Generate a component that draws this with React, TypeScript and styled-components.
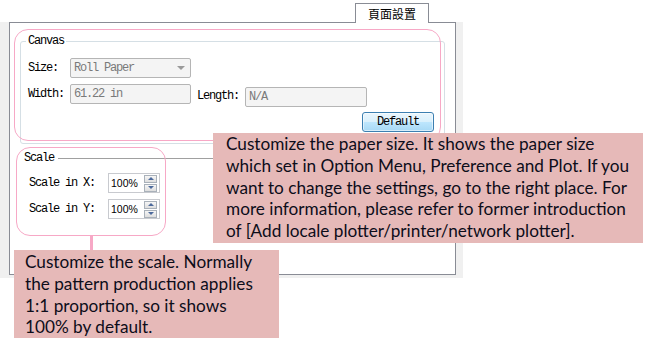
import React from "react";
import styled, { createGlobalStyle } from "styled-components";

const Global = createGlobalStyle`
  html, body { margin: 0; padding: 0; background: #ffffff; }
  body { width: 650px; height: 342px; overflow: hidden; }
`;

const Stage = styled.div`
  position: relative;
  width: 650px;
  height: 342px;
  font-family: "Liberation Mono", monospace;
  font-size: 12px;
  letter-spacing: -1.2px;
  color: #000;
`;

const Window = styled.div`
  width: 463px;
  display: flex;
  flex-direction: column;
`;

const TabStrip = styled.div`
  height: 22px;
  display: flex;
  align-items: flex-end;
  padding-left: 355px;
  position: relative;
  z-index: 1;
`;

const Tab = styled.div`
  box-sizing: border-box;
  width: 74px;
  height: 20px;
  margin-bottom: -1px;
  border: 1px solid #898c95;
  border-bottom: none;
  background: #ffffff;
  display: flex;
  align-items: center;
  justify-content: center;
  font-family: "Noto Sans CJK TC", "Noto Sans CJK SC", sans-serif;
  font-size: 12px;
  letter-spacing: 0;
  line-height: 12px;
  padding-top: 1px;
`;

const Body = styled.div`
  display: flex;
  background: #f0f0f0;
  padding-bottom: 3px;
`;

const Gutter = styled.div<{ $w: number }>`
  width: ${(p) => p.$w}px;
  flex: none;
`;

const Panel = styled.div`
  box-sizing: border-box;
  width: 448px;
  height: 253px;
  border: 1px solid #898c95;
  background: #ffffff;
  padding: 12px 10px 0 10px;
  display: flex;
  flex-direction: column;
`;

const Group = styled.fieldset`
  margin: 0;
  border: 1px solid #d5dfe5;
  border-radius: 3px;
  padding: 11px 10px 11px 7px;
  min-inline-size: 0;
  display: flex;
  flex-direction: column;
`;

const Legend = styled.legend`
  padding: 0 2px;
  margin-left: -2px;
  line-height: 12px;
  height: 12px;
`;

const Row = styled.div<{ $mt?: number }>`
  display: flex;
  align-items: flex-start;
  margin-top: ${(p) => p.$mt ?? 0}px;
`;

const Label = styled.div<{ $w: number; $ml?: number; $mt?: number }>`
  width: ${(p) => p.$w}px;
  margin-left: ${(p) => p.$ml ?? 0}px;
  margin-top: ${(p) => p.$mt ?? 0}px;
  height: 20px;
  line-height: 20px;
  flex: none;
  white-space: nowrap;
`;

const Field = styled.div<{ $w: number; $mt?: number }>`
  box-sizing: border-box;
  width: ${(p) => p.$w}px;
  height: 20px;
  margin-top: ${(p) => p.$mt ?? 0}px;
  border: 1px solid #b5b5b5;
  border-radius: 2px;
  background: #f4f4f4;
  color: #7a7a7a;
  padding-left: 3px;
  line-height: 18px;
  display: flex;
  align-items: center;
  justify-content: space-between;
  flex: none;
`;

const Arrow = styled.span`
  width: 0;
  height: 0;
  border-left: 4px solid transparent;
  border-right: 4px solid transparent;
  border-top: 4px solid #9a9a9a;
  margin-right: 5px;
`;

const ButtonRow = styled.div`
  display: flex;
  justify-content: flex-end;
  margin-top: 5px;
`;

const Button = styled.div`
  box-sizing: border-box;
  width: 72px;
  height: 20px;
  border: 1px solid #3c7fb1;
  border-radius: 3px;
  background: linear-gradient(#eaf6fd 0%, #d9f0fc 50%, #bee6fd 50%, #a7d9f5 100%);
  box-shadow: inset 0 0 0 1px rgba(255, 255, 255, 0.55);
  display: flex;
  align-items: center;
  justify-content: center;
  line-height: 18px;
`;

const Section = styled.div`
  margin-top: 8px;
  display: flex;
  flex-direction: column;
`;

const SectionHead = styled.div`
  display: flex;
  align-items: center;
  height: 12px;
  line-height: 12px;
  padding-left: 4px;
`;

const HeadLine = styled.div`
  flex: 1;
  height: 0;
  border-top: 1px solid #a0a0a0;
  margin-left: 4px;
`;

const SpinBox = styled.div`
  box-sizing: border-box;
  width: 52px;
  height: 20px;
  border: 1px solid #c8cacf;
  background: #ffffff;
  display: flex;
  align-items: center;
  justify-content: space-between;
  padding: 0 2px 0 2px;
  font-family: "Liberation Sans", Arial, sans-serif;
  font-size: 10.5px;
  letter-spacing: 0;
  flex: none;
`;

const Spinner = styled.div`
  display: flex;
  flex-direction: column;
  gap: 1px;
`;

const SpinBtn = styled.div<{ $down?: boolean }>`
  box-sizing: border-box;
  width: 13px;
  height: 8px;
  border: 1px solid #a9b1ba;
  background: linear-gradient(#f6f6f6, #dedede);
  display: flex;
  align-items: center;
  justify-content: center;
  &::after {
    content: "";
    width: 0;
    height: 0;
    border-left: 3px solid transparent;
    border-right: 3px solid transparent;
    ${(p) =>
      p.$down
        ? "border-top: 3px solid #4d6a9c;"
        : "border-bottom: 3px solid #4d6a9c;"}
  }
`;

const Highlight = styled.div<{ $x: number; $y: number; $w: number; $h: number }>`
  position: absolute;
  left: ${(p) => p.$x}px;
  top: ${(p) => p.$y}px;
  width: ${(p) => p.$w}px;
  height: ${(p) => p.$h}px;
  box-sizing: border-box;
  border: 1px solid #f7a8c6;
  border-radius: 14px;
  pointer-events: none;
`;

const Connector = styled.div`
  position: absolute;
  left: 90px;
  top: 235px;
  width: 3px;
  height: 15px;
  background: #f7a8c6;
`;

const Callout = styled.div<{ $x: number; $y: number; $w: number; $h: number; $pl: number; $pt: number }>`
  position: absolute;
  left: ${(p) => p.$x}px;
  top: ${(p) => p.$y}px;
  width: ${(p) => p.$w}px;
  height: ${(p) => p.$h}px;
  box-sizing: border-box;
  padding: ${(p) => p.$pt}px 0 0 ${(p) => p.$pl}px;
  background: #e6b9b8;
  font-family: Lato, "Open Sans", sans-serif;
  font-size: 17.2px;
  letter-spacing: 0;
  line-height: 21.8px;
  color: #0d0d1a;
  white-space: nowrap;
`;

export default function App() {
  return (
    <>
      <Global />
      <Stage>
        <Window>
          <TabStrip>
            <Tab>頁面設置</Tab>
          </TabStrip>
          <Body>
            <Gutter $w={9} />
            <Panel>
              <Group>
                <Legend>Canvas</Legend>
                <Row>
                  <Label $w={42}>Size:</Label>
                  <Field $w={121}>
                    Roll Paper
                    <Arrow />
                  </Field>
                </Row>
                <Row $mt={6}>
                  <Label $w={42}>Width:</Label>
                  <Field $w={121}>61.22 in</Field>
                  <Label $w={48} $ml={6} $mt={2}>Length:</Label>
                  <Field $w={122} $mt={3}>N/A</Field>
                </Row>
                <ButtonRow>
                  <Button>Default</Button>
                </ButtonRow>
              </Group>
              <Section>
                <SectionHead>
                  Scale
                  <HeadLine />
                </SectionHead>
                <Row $mt={9}>
                  <Label $w={79} $ml={9}>Scale in X:</Label>
                  <SpinBox>
                    100%
                    <Spinner>
                      <SpinBtn />
                      <SpinBtn $down />
                    </Spinner>
                  </SpinBox>
                </Row>
                <Row $mt={6}>
                  <Label $w={79} $ml={9}>Scale in Y:</Label>
                  <SpinBox>
                    100%
                    <Spinner>
                      <SpinBtn />
                      <SpinBtn $down />
                    </Spinner>
                  </SpinBox>
                </Row>
              </Section>
            </Panel>
            <Gutter $w={7} />
          </Body>
        </Window>

        <Highlight $x={14} $y={29} $w={427} $h={112} />
        <Highlight $x={16} $y={147} $w={150} $h={89} />
        <Connector />

        <Callout $x={213} $y={133} $w={430} $h={110} $pl={13} $pt={0}>
          Customize the paper size. It shows the paper size
          <br />
          which set in Option Menu, Preference and Plot. If you
          <br />
          want to change the settings, go to the right place. For
          <br />
          more information, please refer to former introduction
          <br />
          of [Add locale plotter/printer/network plotter].
        </Callout>
        <Callout $x={14} $y={250} $w={265} $h={88} $pl={11} $pt={1}>
          Customize the scale. Normally
          <br />
          the pattern production applies
          <br />
          1:1 proportion, so it shows
          <br />
          100% by default.
        </Callout>
      </Stage>
    </>
  );
}
